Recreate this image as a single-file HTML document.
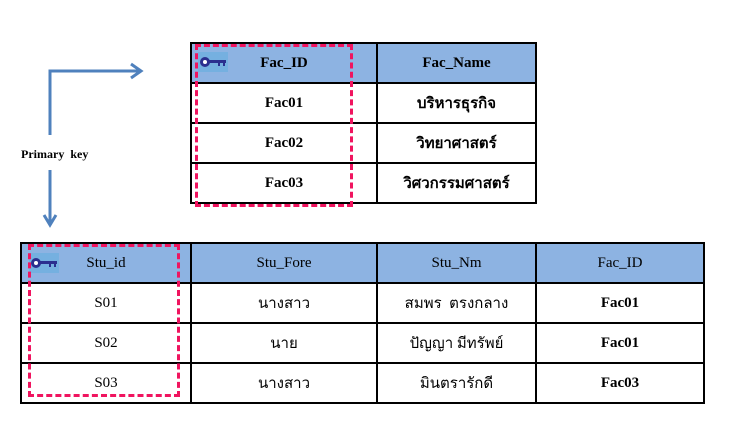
<!DOCTYPE html>
<html><head><meta charset="utf-8"><style>
body{margin:0;width:750px;height:438px;background:#fff;position:relative;overflow:hidden;font-family:"Liberation Serif",serif;font-size:15px;color:#000}
.t{position:absolute;border-collapse:collapse;table-layout:fixed}
.t td{border:2px solid #000;text-align:center;height:40px;padding:0;box-sizing:border-box}
.h td{background:#8db3e2}
.b{font-weight:bold}
.dash{position:absolute;border:3px dashed #f0145f;box-sizing:border-box}
.key{position:absolute;width:30px;height:20px;background:#75b0e0}
</style></head><body>
<svg style="position:absolute;left:0;top:0" width="750" height="438">
<g stroke="#4f81bd" stroke-width="3" fill="none">
<polyline points="50,135 50,71 139,71"/>
<polyline points="131,64 141,71 131,78"/>
<line x1="50" y1="170" x2="50" y2="224"/>
<polyline points="44,215 50,225 56,215"/>
</g></svg>
<div style="position:absolute;left:21px;top:147px;font-weight:bold;font-size:12px;word-spacing:3px">Primary key</div>

<table class="t" style="left:190px;top:42px;width:347px">
<tr class="h"><td class="b" style="width:186px">Fac_ID</td><td class="b">Fac_Name</td></tr>
<tr><td class="b">Fac01</td><td class="b">บริหารธุรกิจ</td></tr>
<tr><td class="b">Fac02</td><td class="b">วิทยาศาสตร์</td></tr>
<tr><td class="b">Fac03</td><td class="b">วิศวกรรมศาสตร์</td></tr>
</table>

<table class="t" style="left:20px;top:242px;width:685px">
<tr class="h"><td style="width:170px">Stu_id</td><td style="width:186px">Stu_Fore</td><td style="width:159px">Stu_Nm</td><td>Fac_ID</td></tr>
<tr><td>S01</td><td>นางสาว</td><td>สมพร&nbsp; ตรงกลาง</td><td class="b">Fac01</td></tr>
<tr><td>S02</td><td>นาย</td><td>ปัญญา มีทรัพย์</td><td class="b">Fac01</td></tr>
<tr><td>S03</td><td>นางสาว</td><td>มินตรารักดี</td><td class="b">Fac03</td></tr>
</table>

<div class="key" style="left:198px;top:52px"><svg width="30" height="20"><circle cx="7" cy="10" r="5" fill="#2b2f8f"/><circle cx="7" cy="10" r="2" fill="#fff"/><rect x="11" y="8" width="17" height="3" fill="#2b2f8f"/><rect x="20" y="11" width="2" height="3" fill="#2b2f8f"/><rect x="25" y="11" width="2" height="3" fill="#2b2f8f"/></svg></div>
<div class="key" style="left:29px;top:253px"><svg width="30" height="20"><circle cx="7" cy="10" r="5" fill="#2b2f8f"/><circle cx="7" cy="10" r="2" fill="#fff"/><rect x="11" y="8" width="17" height="3" fill="#2b2f8f"/><rect x="20" y="11" width="2" height="3" fill="#2b2f8f"/><rect x="25" y="11" width="2" height="3" fill="#2b2f8f"/></svg></div>

<div class="dash" style="left:195px;top:44px;width:158px;height:163px"></div>
<div class="dash" style="left:28px;top:244px;width:152px;height:153px"></div>
</body></html>
